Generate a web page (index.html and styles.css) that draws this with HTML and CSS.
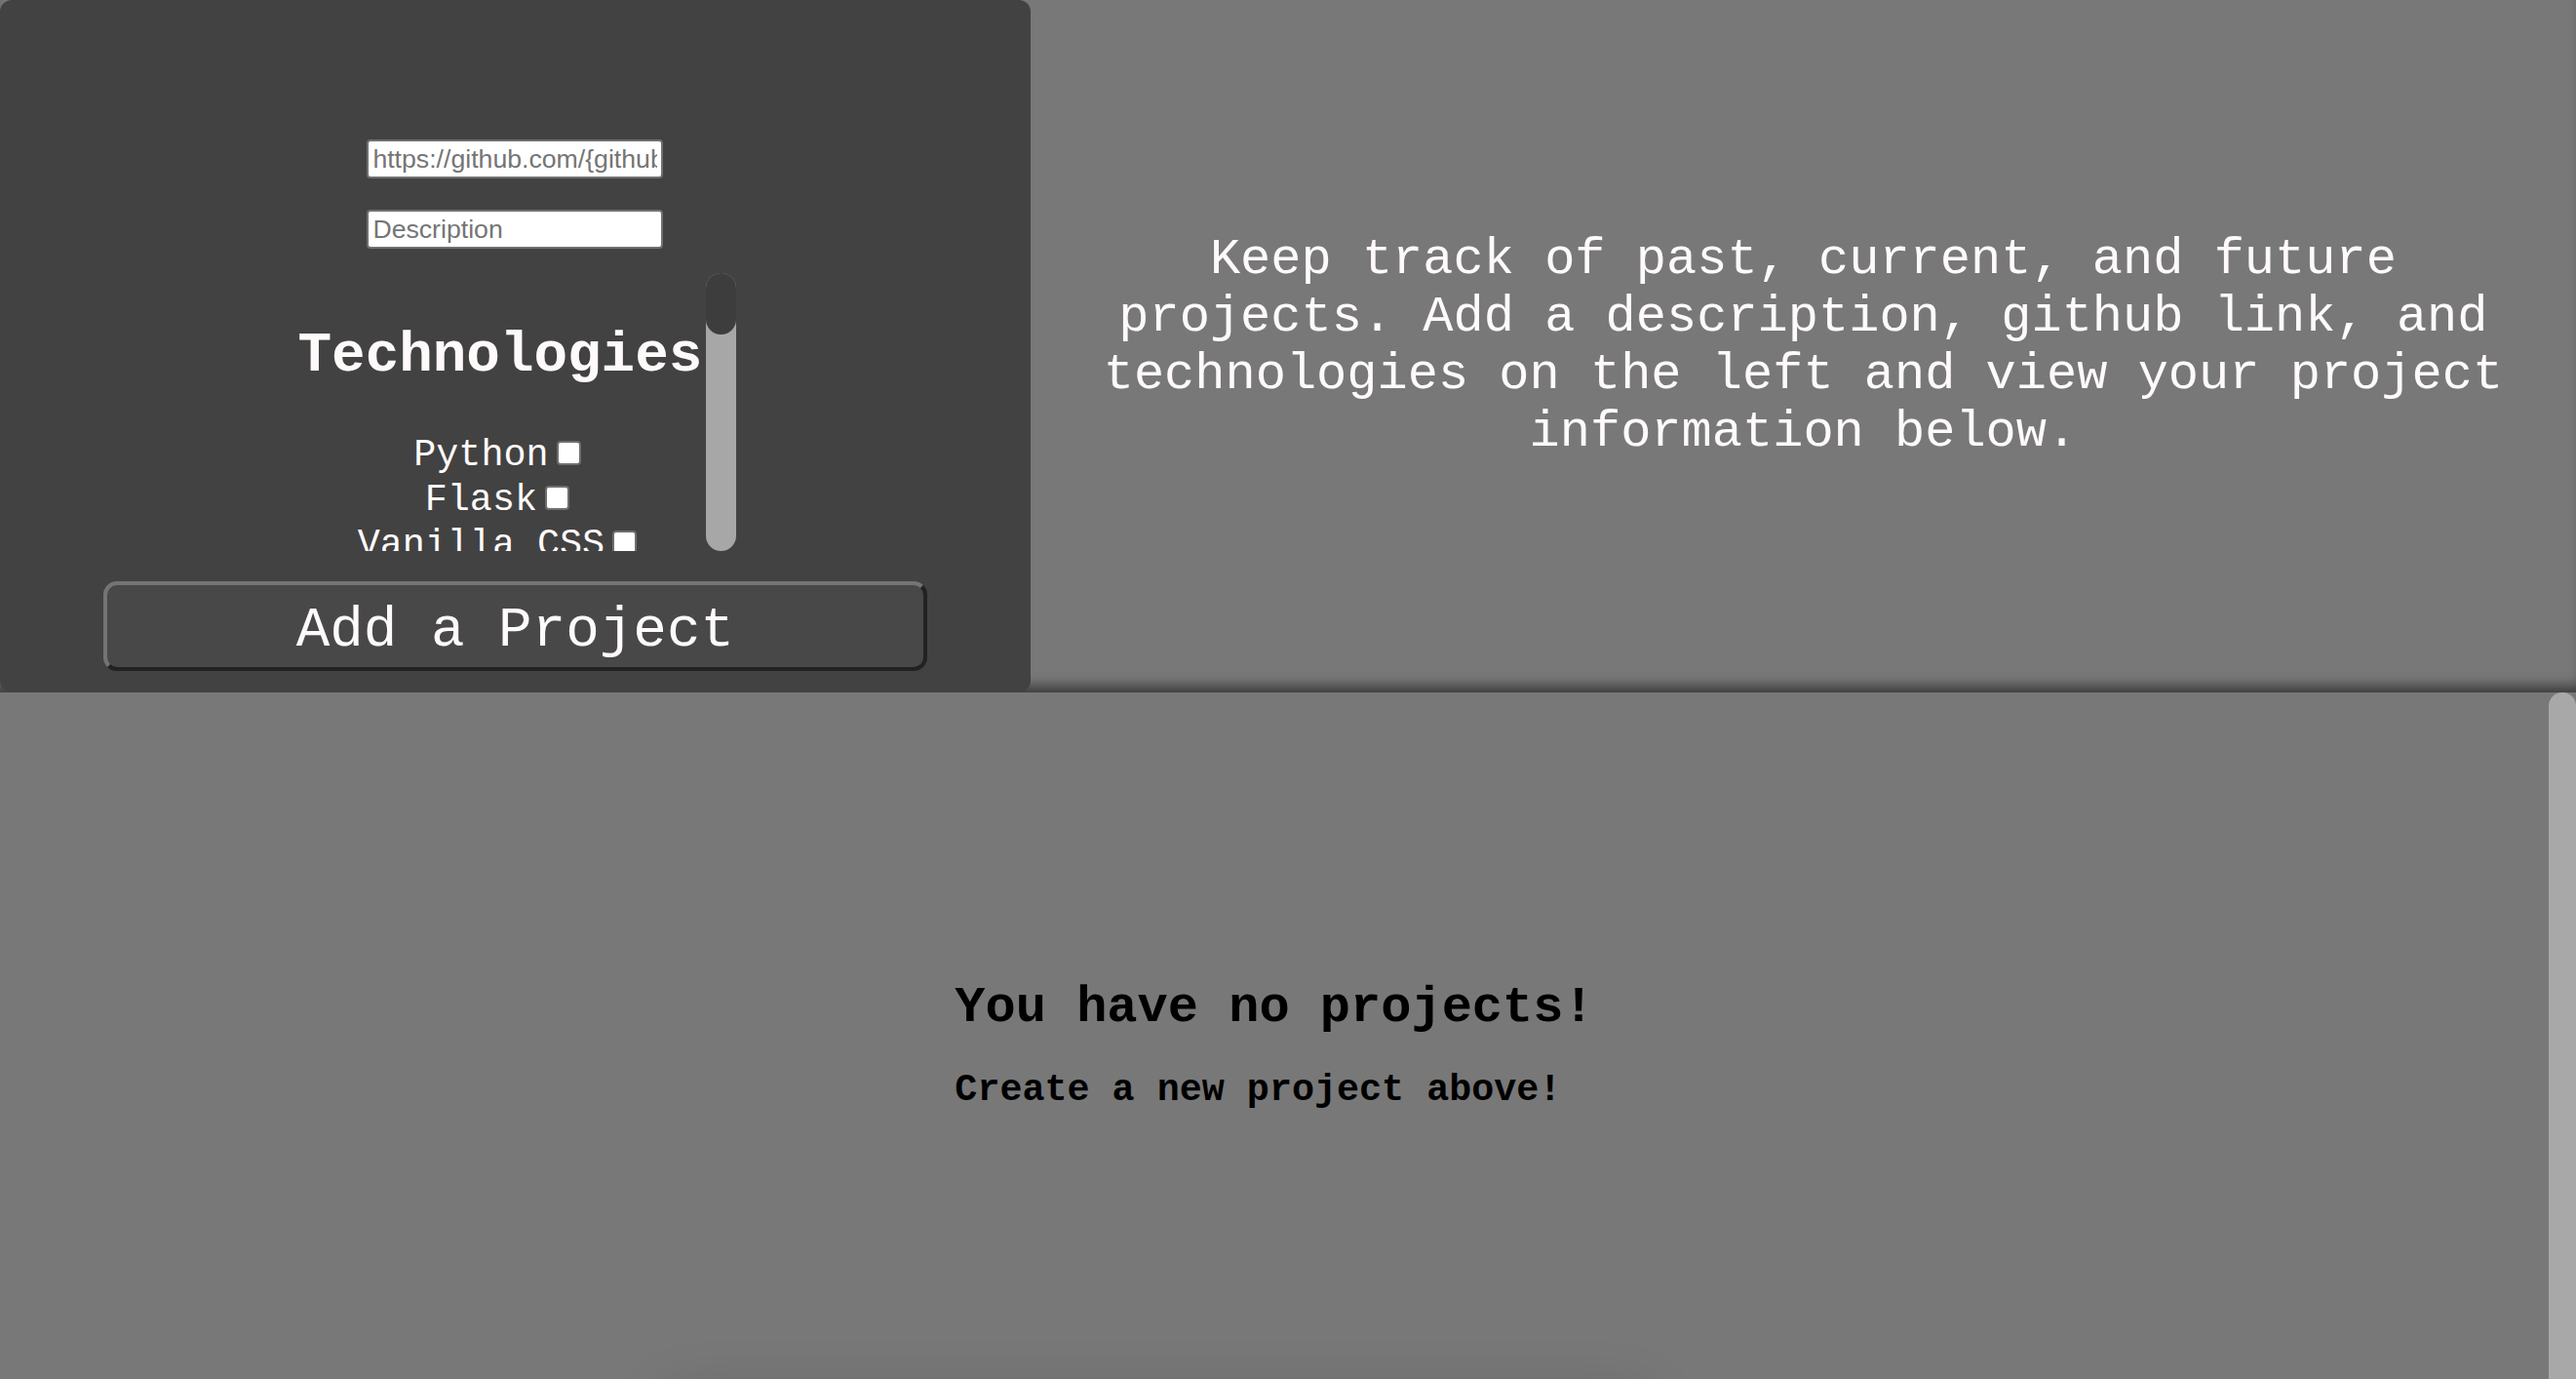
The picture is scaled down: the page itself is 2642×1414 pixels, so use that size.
FILE: index.html
```html
<!DOCTYPE html>
<html lang="en">
<head>
<meta charset="utf-8">
<title>Projects</title>
<link rel="stylesheet" href="styles.css">
</head>
<body>
<header class="top">
  <form class="panel">
    <input class="field field-link" type="text" placeholder="https://github.com/{github_username}/{repository}">
    <input class="field field-desc" type="text" placeholder="Description">
    <div class="tech-box">
      <div class="tech">
        <h2 class="tech-title">Technologies</h2>
        <label class="tech-item">Python<input type="checkbox"></label>
        <label class="tech-item">Flask<input type="checkbox"></label>
        <label class="tech-item">Vanilla CSS<input type="checkbox"></label>
      </div>
      <div class="tech-bar"><div class="tech-thumb"></div></div>
    </div>
    <button class="add-btn" type="button">Add a Project</button>
  </form>
  <div class="intro">
    <p class="intro-text">Keep track of past, current, and future projects. Add a description, github link, and technologies on the left and view your project information below.</p>
  </div>
</header>
<main class="bottom">
  <div class="bottom-content">
    <div class="empty">
      <h2 class="empty-title">You have no projects!</h2>
      <p class="empty-sub">Create a new project above!</p>
    </div>
    <div class="projects"></div>
  </div>
  <div class="page-bar"><div class="page-thumb"></div></div>
</main>
</body>
</html>
```
FILE: styles.css
```css
html, body {
  margin: 0;
  padding: 0;
  height: 100%;
  overflow: hidden;
  background: #787878;
}

body {
  font-family: "Courier New", "Liberation Mono", monospace;
}

.top {
  display: flex;
  height: 710px;
  background: #787878;
  box-shadow: inset 0 -14px 14px -8px rgba(0, 0, 0, 0.55);
  position: relative;
  z-index: 1;
}

.panel {
  width: 40%;
  flex: none;
  box-sizing: border-box;
  background: #424242;
  border-radius: 12px;
  display: flex;
  flex-direction: column;
  align-items: center;
  padding-top: 143px;
  margin: 0;
}

.field {
  box-sizing: border-box;
  width: 304px;
  height: 40px;
  margin: 0;
  padding: 2px 4px;
  border: 2px solid #707070;
  border-radius: 4px;
  background: #fff;
  font-family: "Liberation Sans", Arial, sans-serif;
  font-size: 26.67px;
  color: #000;
}

.field::placeholder {
  color: #757575;
}

.field-link {
  margin-bottom: 32px;
}

.field-desc {
  margin-bottom: 25px;
}

.tech-box {
  display: flex;
  width: 453px;
  height: 285px;
  flex: none;
}

.tech {
  flex: 1;
  overflow: hidden;
  text-align: center;
  color: #fffafa;
}

.tech-bar {
  width: 31px;
  flex: none;
  background: #a7a7a7;
  border-radius: 16px;
}

.tech-thumb {
  height: 63px;
  background: #3d3d3d;
  border-radius: 16px;
}

.tech-title {
  font-size: 57.6px;
  font-weight: bold;
  margin: 52px 0 46.5px;
  line-height: normal;
}

.tech-item {
  display: block;
  font-size: 38.4px;
  line-height: 46px;
  white-space: nowrap;
}

.tech-item input {
  -webkit-appearance: none;
  appearance: none;
  box-sizing: border-box;
  width: 25px;
  height: 25px;
  margin: 0 6px 0 8px;
  background: #fff;
  border: 2px solid #6e6e6e;
  border-radius: 4px;
  vertical-align: baseline;
}

.add-btn {
  box-sizing: border-box;
  width: 80%;
  height: 92px;
  margin-top: 31px;
  padding: 8px 0 0;
  background: #484848;
  color: #fffafa;
  font-family: "Courier New", "Liberation Mono", monospace;
  font-size: 57.6px;
  border: 4px solid;
  border-color: #747474 #222 #222 #747474;
  border-radius: 14px;
  flex: none;
}

.intro {
  flex: 1;
  display: flex;
  align-items: center;
  justify-content: center;
  padding: 0 40px;
}

.intro-text {
  margin: 0;
  text-align: center;
  font-size: 52px;
  line-height: normal;
  color: #fffafa;
}

.bottom {
  display: flex;
  height: calc(100vh - 710px);
  overflow: hidden;
  background: #787878;
}

.bottom-content {
  flex: 1;
  padding-top: 294px;
}

.page-bar {
  width: 28px;
  flex: none;
}

.page-thumb {
  height: 900px;
  background: #a8a8a8;
  border-radius: 14px;
}

.empty {
  width: fit-content;
  margin: 0 auto;
  color: #000;
}

.empty-title {
  margin: 0 0 33px;
  font-size: 52px;
  font-weight: bold;
  line-height: normal;
}

.empty-sub {
  margin: 0;
  font-size: 38.4px;
  font-weight: bold;
  line-height: normal;
}

.projects {
  width: 1000px;
  height: 300px;
  margin: 300px 0 0 686px;
  background: #787878;
  box-shadow: 0 0 60px rgba(0, 0, 0, 0.22);
}
```
